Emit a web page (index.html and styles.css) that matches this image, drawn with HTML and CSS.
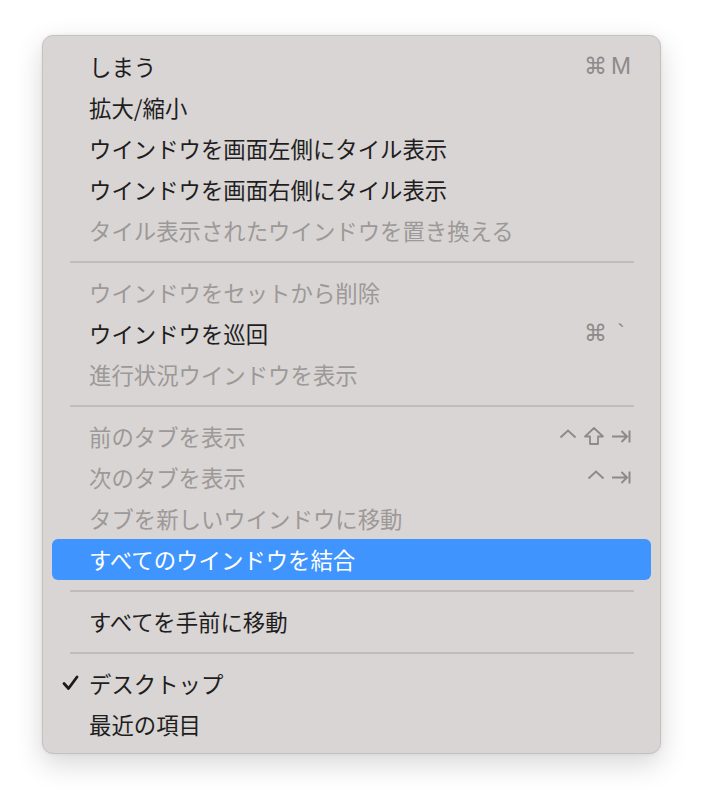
FILE: index.html
```html
<!DOCTYPE html>
<html lang="ja">
<head>
<meta charset="utf-8">
<link rel="stylesheet" href="styles.css">
</head>
<body>
<div class="menu">
  <div class="item"><span class="check"></span><span class="label">しまう</span><span class="keys"><span class="cmd">⌘</span><span class="key">M</span></span></div>
  <div class="item"><span class="check"></span><span class="label">拡大/縮小</span></div>
  <div class="item"><span class="check"></span><span class="label">ウインドウを画面左側にタイル表示</span></div>
  <div class="item"><span class="check"></span><span class="label">ウインドウを画面右側にタイル表示</span></div>
  <div class="item disabled"><span class="check"></span><span class="label">タイル表示されたウインドウを置き換える</span></div>
  <div class="sep"></div>
  <div class="item disabled"><span class="check"></span><span class="label">ウインドウをセットから削除</span></div>
  <div class="item"><span class="check"></span><span class="label">ウインドウを巡回</span><span class="keys"><span class="cmd">⌘</span><span class="key tick">`</span></span></div>
  <div class="item disabled"><span class="check"></span><span class="label">進行状況ウインドウを表示</span></div>
  <div class="sep"></div>
  <div class="item disabled"><span class="check"></span><span class="label">前のタブを表示</span><span class="keys">
    <svg class="ico" width="18" height="20" viewBox="0 0 18 20"><path d="M1.5 11.5 L9 4.5 L16.5 11.5" fill="none" stroke="currentColor" stroke-width="2"/></svg>
    <svg class="ico" width="22" height="20" viewBox="0 0 22 20"><path d="M11 2 L20 10.5 L15 10.5 L15 18 L7 18 L7 10.5 L2 10.5 Z" fill="none" stroke="currentColor" stroke-width="1.8" stroke-linejoin="round"/></svg>
    <svg class="ico" width="20" height="20" viewBox="0 0 20 20"><path d="M1 10.5 H16 M10.5 5 L16 10.5 L10.5 16 M18.5 4.5 V16.5" fill="none" stroke="currentColor" stroke-width="2"/></svg>
  </span></div>
  <div class="item disabled"><span class="check"></span><span class="label">次のタブを表示</span><span class="keys">
    <svg class="ico" width="18" height="20" viewBox="0 0 18 20"><path d="M1.5 11.5 L9 4.5 L16.5 11.5" fill="none" stroke="currentColor" stroke-width="2"/></svg>
    <svg class="ico" width="20" height="20" viewBox="0 0 20 20"><path d="M1 10.5 H16 M10.5 5 L16 10.5 L10.5 16 M18.5 4.5 V16.5" fill="none" stroke="currentColor" stroke-width="2"/></svg>
  </span></div>
  <div class="item disabled"><span class="check"></span><span class="label">タブを新しいウインドウに移動</span></div>
  <div class="item active"><span class="check"></span><span class="label">すべてのウインドウを結合</span></div>
  <div class="sep"></div>
  <div class="item"><span class="check"></span><span class="label">すべてを手前に移動</span></div>
  <div class="sep"></div>
  <div class="item"><span class="check"><svg width="17" height="16" viewBox="0 0 17 16"><path d="M2 8.5 L6.5 13.5 L15 2" fill="none" stroke="#1a1a1a" stroke-width="2.8" stroke-linecap="round" stroke-linejoin="round"/></svg></span><span class="label">デスクトップ</span></div>
  <div class="item"><span class="check"></span><span class="label">最近の項目</span></div>
</div>
</body>
</html>
```

FILE: styles.css
```css
html, body {
  margin: 0;
  padding: 0;
  background: #ffffff;
}
body {
  width: 704px;
  height: 805px;
  overflow: hidden;
  font-family: "Noto Sans CJK JP", "Noto Sans", sans-serif;
}
.menu {
  margin: 35px 0 0 42px;
  width: 617px;
  box-sizing: content-box;
  background: #d9d5d4;
  border: 1px solid #c4c1c0;
  border-radius: 11px;
  padding: 10px 0 8px;
  box-shadow: 0 10px 28px rgba(0, 0, 0, 0.16), 0 0 4px rgba(0, 0, 0, 0.06);
}
.item {
  display: flex;
  align-items: center;
  height: 41px;
  margin: 0 9px;
  padding: 0 20px 1px 10px;
  box-sizing: border-box;
  border-radius: 6px;
  color: #1f1e1e;
  font-size: 22.4px;
  line-height: 40px;
}
.item.disabled {
  color: #9c9998;
}
.item.active {
  background: #3f95fd;
  color: #ffffff;
}
.check {
  width: 27px;
  flex: none;
  display: flex;
  align-items: center;
}
.label {
  flex: 1;
  white-space: nowrap;
}
.keys {
  display: flex;
  align-items: center;
  gap: 6px;
  color: #8d8a8a;
}
.cmd {
  font-family: "DejaVu Sans", sans-serif;
  font-size: 23px;
  width: 21px;
}
.key {
  font-family: "Liberation Sans", sans-serif;
  font-size: 24px;
  width: 20px;
  text-align: left;
}
.key.tick {
  text-align: center;
  width: 20px;
}
.ico {
  display: block;
}
.sep {
  height: 21px;
  display: flex;
  align-items: center;
  margin: 0 26px 0 27px;
}
.sep::before {
  content: "";
  display: block;
  width: 100%;
  height: 2px;
  background: #c0bcbb;
}
```
